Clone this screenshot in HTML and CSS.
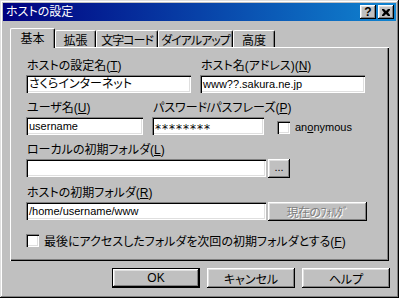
FILE: index.html
```html
<!DOCTYPE html>
<html lang="ja">
<head>
    <meta charset="UTF-8">
    <title>ホストの設定</title>
    <link rel="stylesheet" href="styles.css">
</head>
<body>

    <div class="window">
        <div class="titlebar">
            <span class="title">ホストの設定</span>
            <span class="cap-btn help">?</span>
            <span class="cap-btn close">
                <svg width="8" height="7" viewBox="0 0 8 7">
                    <path d="M0 0h2l2 2 2-2h2v1l-2 2.5 2 2.5v1h-2l-2-2-2 2h-2v-1l2-2.5-2-2.5z" fill="#000"/>
                </svg>
            </span>
        </div>

        <div class="content">
            <div class="tabs">
                <div class="tab active tab-basic">基本</div>
                <div class="tab tab-ext">拡張</div>
                <div class="tab tab-code">文字コード</div>
                <div class="tab tab-dial">ダイアルアップ</div>
                <div class="tab tab-adv">高度</div>
            </div>

            <div class="panel">
                <div class="row">
                    <div class="field setname">
                        <div class="label">ホストの設定名(<u>T</u>)</div>
                        <div class="edit">さくらインターネット</div>
                    </div>
                    <div class="field hostname">
                        <div class="label">ホスト名(アドレス)(<u>N</u>)</div>
                        <div class="edit latin">www??.sakura.ne.jp</div>
                    </div>
                </div>

                <div class="row">
                    <div class="field user">
                        <div class="label">ユーザ名(<u>U</u>)</div>
                        <div class="edit latin">username</div>
                    </div>
                    <div class="field pass">
                        <div class="label">パスワード/パスフレーズ(<u>P</u>)</div>
                        <div class="edit stars">********</div>
                    </div>
                    <div class="check anon latin">
                        <span class="box"></span>
                        <span>an<u>o</u>nymous</span>
                    </div>
                </div>

                <div class="row">
                    <div class="field wide">
                        <div class="label">ローカルの初期フォルダ(<u>L</u>)</div>
                        <div class="inline">
                            <div class="edit folder"></div>
                            <div class="btn browse">...</div>
                        </div>
                    </div>
                </div>

                <div class="row row-remote">
                    <div class="field wide">
                        <div class="label">ホストの初期フォルダ(<u>R</u>)</div>
                        <div class="inline">
                            <div class="edit folder latin">/home/username/www</div>
                            <div class="btn current disabled">現在のﾌｫﾙﾀﾞ</div>
                        </div>
                    </div>
                </div>

                <div class="check last-folder">
                    <span class="box"></span>
                    <span>最後にアクセスしたフォルダを次回の初期フォルダとする(<u>F</u>)</span>
                </div>
            </div>

            <div class="buttons">
                <div class="btn default latin">OK</div>
                <div class="btn">キャンセル</div>
                <div class="btn">ヘルプ</div>
            </div>
        </div>
    </div>

</body>
</html>
```

FILE: styles.css
```css
body {
    margin: 0;
    font-family: "Liberation Sans", "Noto Sans CJK JP", sans-serif;
    font-size: 12px;
    color: #000;
    background: #c0c0c0;
}

u {
    text-underline-offset: 1px;
}

.latin {
    font-size: 11px;
}

.window {
    width: 399px;
    height: 298px;
    box-sizing: border-box;
    padding: 3px;
    background: #c0c0c0;
    box-shadow: inset -1px -1px #000, inset 1px 1px #dfdfdf,
                inset -2px -2px #808080, inset 2px 2px #fff;
    display: flex;
    flex-direction: column;
}

/* title bar */
.titlebar {
    height: 18px;
    display: flex;
    align-items: center;
    padding: 0 2px 0 2px;
    background: linear-gradient(to right, #000080, #1084d0);
    color: #fff;
}
.title {
    flex: 1;
    font-feature-settings: "palt";
    line-height: 18px;
    padding-left: 1px;
}
.cap-btn {
    width: 16px;
    height: 14px;
    box-sizing: border-box;
    background: #c0c0c0;
    box-shadow: inset -1px -1px #000, inset 1px 1px #fff,
                inset -2px -2px #808080, inset 2px 2px #dfdfdf;
    display: flex;
    align-items: center;
    justify-content: center;
    color: #000;
}
.help {
    font-weight: bold;
    font-size: 12px;
    line-height: 14px;
    margin-right: 2px;
}
.close svg {
    display: block;
}

.content {
    flex: 1;
    padding: 7px 7px 0 7px;
    display: flex;
    flex-direction: column;
}

/* tabs */
.tabs {
    height: 19px;
    display: flex;
    align-items: flex-end;
}
.tab {
    height: 17px;
    box-sizing: border-box;
    border-top: 1px solid #fff;
    border-left: 1px solid #fff;
    border-right: 1px solid #000;
    border-radius: 2px 2px 0 0;
    box-shadow: inset -1px 0 #808080;
    display: flex;
    align-items: center;
    justify-content: center;
    font-feature-settings: "palt";
    white-space: nowrap;
}
.tab.active {
    height: 20px;
    margin-bottom: -1px;
    position: relative;
    z-index: 1;
    background: #c0c0c0;
    padding-bottom: 2px;
}
.tab-basic { width: 45px; }
.tab-ext { width: 41px; }
.tab-code { width: 62px; letter-spacing: -1px; }
.tab-dial { width: 75px; letter-spacing: -1px; }
.tab-adv { width: 42px; }

/* tab page */
.panel {
    height: 214px;
    box-sizing: border-box;
    padding: 13px 0 0 16px;
    box-shadow: inset 1px 1px #fff, inset -1px -1px #000, inset -2px -2px #808080;
}
.row {
    display: flex;
    gap: 9px;
    margin-bottom: 9px;
}
.row-remote {
    margin-bottom: 13px;
}
.label {
    height: 12px;
    line-height: 12px;
    margin: 0 0 3px 1px;
    white-space: nowrap;
    font-feature-settings: "palt";
}
.edit {
    height: 18px;
    box-sizing: border-box;
    padding-left: 3px;
    line-height: 18px;
    background: #fff;
    white-space: nowrap;
    overflow: hidden;
    font-feature-settings: "palt";
    box-shadow: inset 1px 1px #808080, inset 2px 2px #000,
                inset -1px -1px #fff, inset -2px -2px #dfdfdf;
}
.stars {
    font-family: "DejaVu Sans", sans-serif;
    font-size: 12px;
    line-height: 24px;
    letter-spacing: 1px;
}
.setname { width: 165px; }
.hostname { width: 165px; }
.user { width: 117px; }
.pass { width: 112px; }
.folder { width: 240px; }

.inline {
    display: flex;
    gap: 2px;
}

/* check boxes */
.check {
    display: flex;
    align-items: center;
    gap: 5px;
    white-space: nowrap;
    font-feature-settings: "palt";
}
.check .box {
    width: 13px;
    height: 13px;
    box-sizing: border-box;
    background: #fff;
    box-shadow: inset 1px 1px #808080, inset 2px 2px #000,
                inset -1px -1px #fff, inset -2px -2px #dfdfdf;
}
.anon {
    align-self: flex-end;
    height: 18px;
    margin-left: 4px;
    padding-top: 2px;
    box-sizing: border-box;
}
.last-folder {
    height: 13px;
}

/* push buttons */
.btn {
    box-sizing: border-box;
    background: #c0c0c0;
    box-shadow: inset -1px -1px #000, inset 1px 1px #fff,
                inset -2px -2px #808080, inset 2px 2px #dfdfdf;
    display: flex;
    align-items: center;
    justify-content: center;
    white-space: nowrap;
    font-feature-settings: "palt";
}
.browse {
    width: 22px;
    height: 19px;
    font-size: 11px;
    padding-bottom: 3px;
}
.current {
    width: 99px;
    height: 19px;
    letter-spacing: -0.5px;
}
.disabled {
    color: #808080;
    text-shadow: 1px 1px 0 #fff;
}
.buttons {
    display: flex;
    justify-content: flex-end;
    gap: 7px;
    margin: 7px -1px 0 0;
}
.buttons .btn {
    width: 88px;
    height: 20px;
}
.buttons .btn.latin {
    font-size: 12px;
}
.btn.default {
    border: 1px solid #000;
}
```
